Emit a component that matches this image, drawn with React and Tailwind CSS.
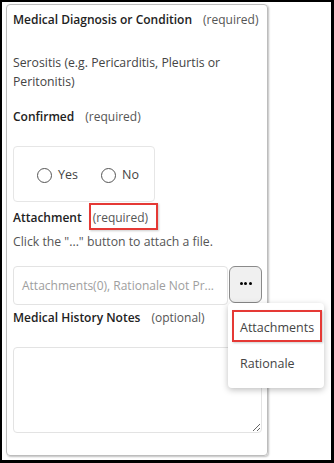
import React from "react";

const font = { fontFamily: '"Open Sans", "Noto Sans", sans-serif' };

function Radio({ label }) {
  return (
    <div className="flex items-center">
      <span className="w-[15px] h-[15px] rounded-full border-[1.5px] border-[#555] bg-white" />
      <span className="ml-[6px] text-[12.5px] leading-[20px] text-[#444]">{label}</span>
    </div>
  );
}

function Label({ title, hint, boxed }) {
  return (
    <div className="leading-[20px] flex whitespace-nowrap items-baseline">
      <span className="text-[12px] font-semibold text-[#222]">{title}</span>
      <span className="relative ml-[11px] text-[12px] text-[#555]">
        {hint}
        {boxed && (
          <span className="absolute left-[-4px] right-[-10px] top-[-5px] bottom-[-2px] border-2 border-[#e53935] shadow-[1px_1px_2px_rgba(0,0,0,0.2)]" />
        )}
      </span>
    </div>
  );
}

export default function App() {
  return (
    <div style={font} className="w-[334px] h-[463px] bg-white border-l-2 border-t-2 border-r-[3px] border-b-[3px] border-black pl-[4px] pt-[2px] overflow-hidden">
      <div className="w-[262px] h-[452px] border border-[#bdbdbd] rounded-[4px] shadow-[1px_1px_2px_rgba(0,0,0,0.25)] pl-[6px] pr-[5px] pt-[5px] flex flex-col">
        <Label title="Medical Diagnosis or Condition" hint="(required)" />
        <p className="mt-[23px] text-[12.25px] leading-[19px] text-[#444]">
          Serositis (e.g. Pericarditis, Pleurtis or Peritonitis)
        </p>
        <div className="mt-[16px]">
          <Label title="Confirmed" hint="(required)" />
        </div>
        <div className="mt-[19px] w-[142px] h-[56px] border border-[#e6e6e6] rounded-[4px] flex items-center pl-[23px] pt-[2px] gap-[23px]">
          <Radio label="Yes" />
          <Radio label="No" />
        </div>
        <div className="mt-[6px]">
          <Label title="Attachment" hint="(required)" boxed />
        </div>
        <p className="mt-[4px] text-[12.25px] leading-[20px] text-[#555]">
          Click the "..." button to attach a file.
        </p>
        <div className="relative mt-[14px] flex items-start">
          <div className="w-[215px] h-[39px] border border-[#e3e3e3] rounded-[4px] flex items-center pl-[8px] text-[12px] text-[#9e9e9e] whitespace-nowrap overflow-hidden">
            Attachments(0), Rationale Not Pr...
          </div>
          <div className="ml-[1px] w-[33px] h-[37px] bg-[#f0f0f0] border border-[#8a8a8a] rounded-[6px] flex items-center justify-center gap-[1.5px] pb-[3px]">
            <span className="w-[3px] h-[3px] rounded-full bg-black" />
            <span className="w-[3px] h-[3px] rounded-full bg-black" />
            <span className="w-[3px] h-[3px] rounded-full bg-black" />
          </div>
          <div className="absolute z-10 left-[215px] top-[37px] w-[96px] bg-white rounded-[4px] shadow-[0_2px_6px_rgba(0,0,0,0.25)] pt-[7px] pb-[6px]">
            <div className="relative h-[36px] flex items-center pl-[12px] text-[12.5px] text-[#444]">
              Attachments
              <span className="absolute left-[4px] right-[2px] top-0 bottom-[4px] border-2 border-[#e53935] shadow-[1px_1px_2px_rgba(0,0,0,0.2)]" />
            </div>
            <div className="h-[36px] flex items-center pl-[12px] text-[12.5px] text-[#444]">
              Rationale
            </div>
          </div>
        </div>
        <div className="mt-[3px]">
          <Label title="Medical History Notes" hint="(optional)" />
        </div>
        <textarea className="mt-[19px] w-[249px] h-[86px] border border-[#e3e3e3] rounded-[4px] outline-none bg-white" />
      </div>
    </div>
  );
}
